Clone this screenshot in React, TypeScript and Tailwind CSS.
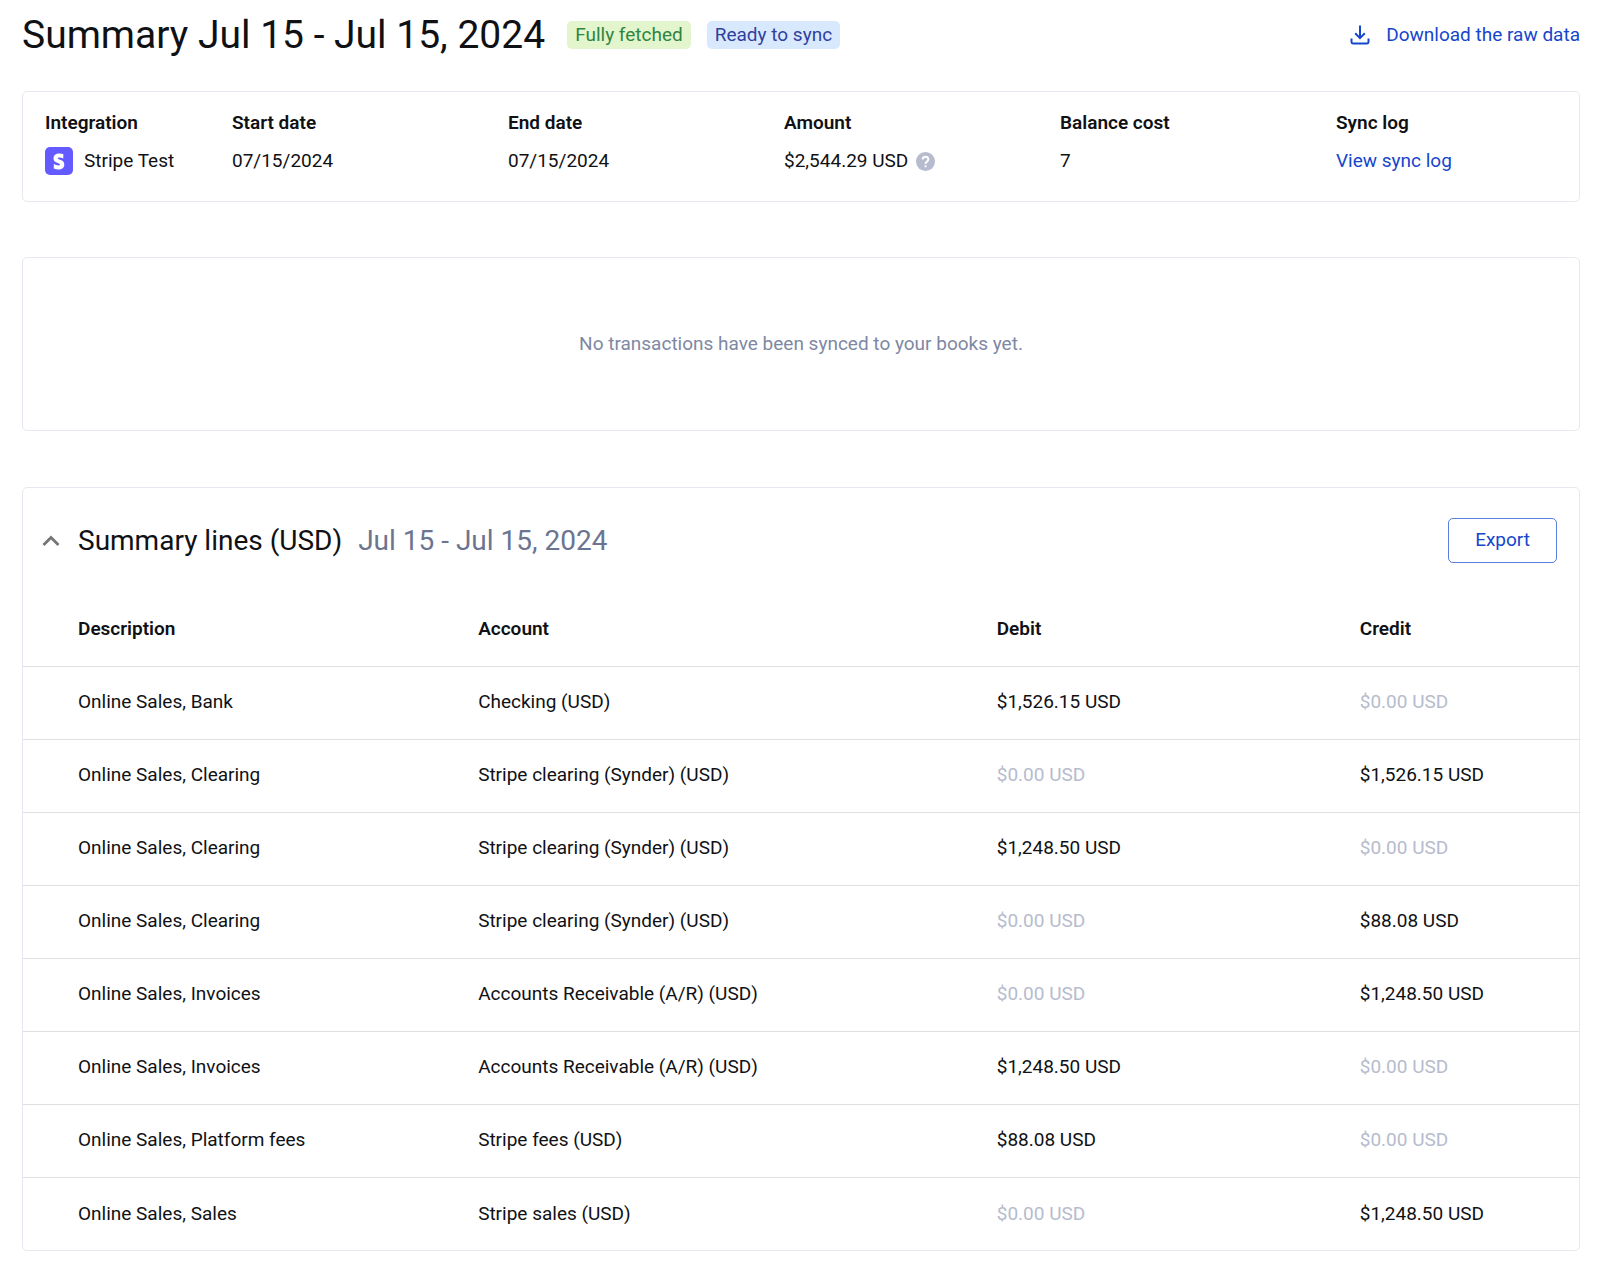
import { useState } from 'react';
import type { ReactNode } from 'react';

type Line = { description: string; account: string; debit: string; credit: string };

const ZERO = '$0.00 USD';

const lines: Line[] = [
  { description: 'Online Sales, Bank', account: 'Checking (USD)', debit: '$1,526.15 USD', credit: ZERO },
  { description: 'Online Sales, Clearing', account: 'Stripe clearing (Synder) (USD)', debit: ZERO, credit: '$1,526.15 USD' },
  { description: 'Online Sales, Clearing', account: 'Stripe clearing (Synder) (USD)', debit: '$1,248.50 USD', credit: ZERO },
  { description: 'Online Sales, Clearing', account: 'Stripe clearing (Synder) (USD)', debit: ZERO, credit: '$88.08 USD' },
  { description: 'Online Sales, Invoices', account: 'Accounts Receivable (A/R) (USD)', debit: ZERO, credit: '$1,248.50 USD' },
  { description: 'Online Sales, Invoices', account: 'Accounts Receivable (A/R) (USD)', debit: '$1,248.50 USD', credit: ZERO },
  { description: 'Online Sales, Platform fees', account: 'Stripe fees (USD)', debit: '$88.08 USD', credit: ZERO },
  { description: 'Online Sales, Sales', account: 'Stripe sales (USD)', debit: ZERO, credit: '$1,248.50 USD' },
];

function DownloadIcon() {
  return (
    <svg className="size-5" viewBox="0 0 20 20" fill="none" stroke="currentColor" strokeWidth="2" aria-hidden="true">
      <path d="M10 .5v12.500M5.200 8.300 10 13.100l4.800-4.800" />
      <path d="M1.500 13.500v3.600c0 .9.600 1.400 1.400 1.400h14.200c.8 0 1.400-.5 1.400-1.400v-3.600" />
    </svg>
  );
}

function StripeIcon() {
  return (
    <svg className="size-7 shrink-0" viewBox="0 0 28 28" aria-hidden="true">
      <rect width="28" height="28" rx="5" fill="#635bff" />
      <path
        d="M12.8 11.3c0-.6.5-.9 1.4-.9 1.3 0 2.8.4 4.100 1.100V7.100A11 11 0 0 0 14.200 6.400c-3.400 0-5.700 1.900-5.700 5 0 4.700 6.400 4 6.400 6 0 .7-.6 1-1.500 1-1.400 0-3.200-.6-4.600-1.400v4.400c1.500.7 3.100 1 4.600 1 3.500 0 5.900-1.700 5.900-5 0-5.100-6.500-4.200-6.500-6.100z"
        fill="#fff"
      />
    </svg>
  );
}

function HelpIcon() {
  return (
    <svg className="size-[19px]" viewBox="0 0 20 20" aria-hidden="true">
      <circle cx="10" cy="10" r="10" fill="#b6bccd" />
      <path d="M7 8c0-1.700 1.300-3 3-3s3 1.200 3 2.800c0 2.100-3 2.300-3 4.700" fill="none" stroke="#fff" strokeWidth="2" />
      <rect x="9" y="14" width="2" height="2" fill="#fff" />
    </svg>
  );
}

function Field({ label, children }: { label: string; children: ReactNode }) {
  return (
    <div className="min-w-0">
      <dt className="font-semibold leading-6">{label}</dt>
      <dd className="mt-3 flex h-7 items-center whitespace-nowrap">{children}</dd>
    </div>
  );
}

function Amount({ value }: { value: string }) {
  return <td className={value === ZERO ? 'text-[#b6bccd]' : undefined}>{value}</td>;
}

export default function App() {
  const [open, setOpen] = useState(true);
  return (
    <main className="bg-white pr-5 pb-8 pl-[22px] font-['Roboto',sans-serif] text-[19px] text-[#101114]">
      <header className="flex h-[70px] items-center justify-between">
        <div className="flex items-center">
          <h1 className="text-[39px] leading-none">Summary Jul 15 - Jul 15, 2024</h1>
          <span className="ml-[22px] rounded-[5px] bg-[#e2f5cd] px-2 leading-7 text-[#2f8540]">Fully fetched</span>
          <span className="ml-4 rounded-[5px] bg-[#d9e9fd] px-2 leading-7 text-[#303f9f]">Ready to sync</span>
        </div>
        <a href="#raw-data" className="flex items-center gap-4 text-[#1546cc]">
          <DownloadIcon />
          Download the raw data
        </a>
      </header>

      <section className="mt-[21px] rounded-[5px] border border-[#e6e8f0]">
        <dl className="grid grid-cols-[187px_276fr_276fr_276fr_276fr_221fr] px-[22px] pt-[19px] pb-[26px]">
          <Field label="Integration">
            <StripeIcon />
            <span className="ml-[11px]">Stripe Test</span>
          </Field>
          <Field label="Start date">07/15/2024</Field>
          <Field label="End date">07/15/2024</Field>
          <Field label="Amount">
            $2,544.29 USD
            <button type="button" aria-label="About this amount" className="ml-2">
              <HelpIcon />
            </button>
          </Field>
          <Field label="Balance cost">7</Field>
          <Field label="Sync log">
            <a href="#sync-log" className="text-[#1546cc]">View sync log</a>
          </Field>
        </dl>
      </section>

      <section className="mt-[55px] rounded-[5px] border border-[#e6e8f0] py-[72px] text-center leading-7 text-[#7e88a3]">
        <p>No transactions have been synced to your books yet.</p>
      </section>

      <section className="mt-14 rounded-[5px] border border-[#e6e8f0]">
        <div className="flex h-[105px] items-center justify-between pr-[22px] pl-4">
          <div className="flex items-center">
            <button type="button" aria-label="Toggle summary lines" aria-expanded={open} onClick={() => setOpen(!open)} className="text-[#757575]">
              <svg className={open ? 'size-6' : 'size-6 rotate-180'} viewBox="0 0 24 24" fill="none" stroke="currentColor" strokeWidth="2.800" aria-hidden="true">
                <path d="m4.500 16 7.500-7.500 7.500 7.500" />
              </svg>
            </button>
            <h2 className="ml-[15px] text-[28px] leading-9">Summary lines (USD)</h2>
            <span className="ml-4 text-[28px] leading-9 text-[#6b7590]">Jul 15 - Jul 15, 2024</span>
          </div>
          <button type="button" className="h-[45px] rounded-[5px] border border-[#1546cc]/70 px-[26px] text-[#1546cc]">
            Export
          </button>
        </div>
        {open && (
          <table className="w-full table-fixed border-collapse text-left [&_td]:p-0 [&_th]:p-0 [&_th]:font-semibold [&_tr>*:first-child]:pl-[55px]">
            <colgroup>
              <col className="w-[29.250%]" />
              <col className="w-[33.330%]" />
              <col className="w-[23.330%]" />
              <col />
            </colgroup>
            <thead>
              <tr className="h-[73px]">
                <th scope="col">Description</th>
                <th scope="col">Account</th>
                <th scope="col">Debit</th>
                <th scope="col">Credit</th>
              </tr>
            </thead>
            <tbody>
              {lines.map((line, i) => (
                <tr key={i} className="h-[73px] border-t border-[#dfe0e4]">
                  <td>{line.description}</td>
                  <td>{line.account}</td>
                  <Amount value={line.debit} />
                  <Amount value={line.credit} />
                </tr>
              ))}
            </tbody>
          </table>
        )}
      </section>
    </main>
  );
}
